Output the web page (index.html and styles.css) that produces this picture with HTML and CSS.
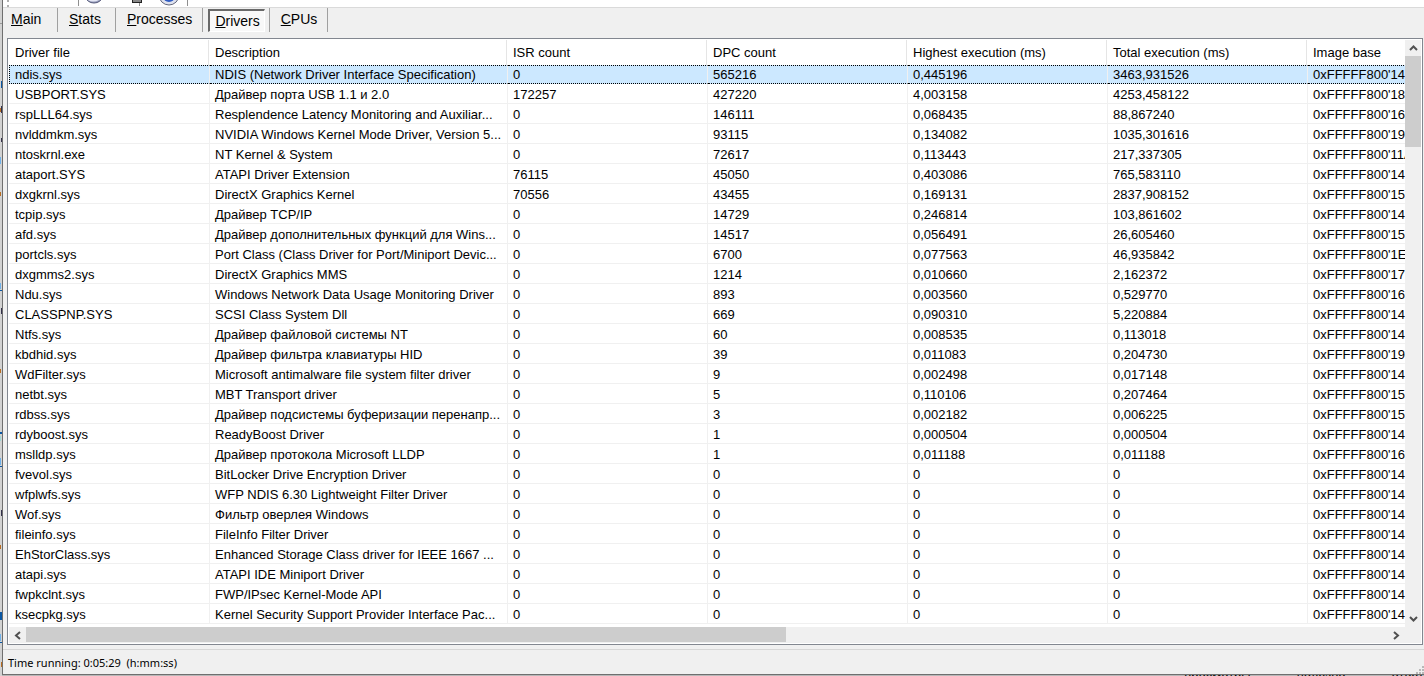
FILE: index.html
```
<!DOCTYPE html>
<html lang="en">
<head>
<meta charset="utf-8">
<title>Drivers</title>
<link rel="stylesheet" href="styles.css">
</head>
<body>
<div class="desktop">
  <div class="behind-left">
    <svg width="2" height="676" viewBox="0 0 2 676" aria-hidden="true">
      <path d="M0 23h2v1H0z" fill="#999"/>
      <path d="M1 81h1v7H1zM0 290h2v1H0zM0 432h2v2H0zM0 466h2v1H0zM0 612h2v8H0zM0 642h2v1H0z" fill="#0a57a4"/>
      <path d="M0 157h1v7H0zM0 283h1v6H0zM0 458h1v7H0zM0 634h1v7H0z" fill="#6fb1ea"/>
      <path d="M0 108h1v4H0zM0 192h1v4H0zM0 369h1v4H0zM0 545h1v4H0zM1 662h1v5H1z" fill="#b86c20"/>
      <path d="M1 106h1v7H1zM1 138h1v4H1zM1 308h1v6H1zM1 510h1v6H1z" fill="#33304a"/>
      <path d="M0 436h1v5H0z" fill="#9ed8d4"/>
    </svg>
  </div>
  <main class="window">
    <div class="toolbar">
      <span class="grip"></span>
      <svg width="260" height="7" viewBox="0 0 260 7" aria-hidden="true">
        <path d="M70.500 0V6M131.500 0V6M179.500 0V6" stroke="#8f8f8f"/>
        <ellipse cx="86" cy="-3" rx="8" ry="6" fill="#9aa0bd" stroke="#55597a"/>
        <path d="M80 0Q85 3 91 0Z" fill="#e6e8f5"/>
        <path d="M124 0h10v3h-10z" fill="#222"/><path d="M125 0h8v2h-8z" fill="#888"/>
        <circle cx="161" cy="-5" r="10" fill="#dfe2ee" stroke="#62667c"/>
        <circle cx="161" cy="-4" r="6" fill="#315ec4"/>
      </svg>
    </div>
    <nav class="tabs">
      <button class="tab"><u>M</u>ain</button>
      <button class="tab"><u>S</u>tats</button>
      <button class="tab"><u>P</u>rocesses</button>
      <button class="tab active"><span><u>D</u>rivers</span></button>
      <button class="tab"><u>C</u>PUs</button>
    </nav>
    <section class="panel">
      <div class="list">
        <table>
          <colgroup><col class="c-file"><col class="c-desc"><col class="c-num"><col class="c-num"><col class="c-num"><col class="c-num"><col class="c-num"></colgroup>
          <thead><tr><th>Driver file</th><th>Description</th><th>ISR count</th><th>DPC count</th><th>Highest execution (ms)</th><th>Total execution (ms)</th><th>Image base</th></tr></thead>
          <tbody id="rows"></tbody>
        </table>
      </div>
      <div class="vbar">
        <button class="arrow" aria-label="Scroll up"><svg width="9" height="6" viewBox="0 0 9 6"><path d="M1 5L4.500 1.500L8 5"/></svg></button>
        <div class="vthumb"></div>
        <button class="arrow down" aria-label="Scroll down"><svg width="9" height="6" viewBox="0 0 9 6"><path d="M1 1L4.500 4.500L8 1"/></svg></button>
      </div>
      <div class="hbar">
        <button class="arrow" aria-label="Scroll left"><svg width="7" height="9" viewBox="0 0 7 9"><path d="M6 1L2 4.500L6 8"/></svg></button>
        <div class="track"><div class="hthumb"></div></div>
        <button class="arrow" aria-label="Scroll right"><svg width="7" height="9" viewBox="0 0 7 9"><path d="M1 1L5 4.500L1 8"/></svg></button>
      </div>
    </section>
    <footer class="status"><span>Time running: 0:05:29&nbsp; (h:mm:ss)</span>
      <svg class="sizer" width="8" height="8" viewBox="0 0 8 8" aria-hidden="true"><path d="M0 6h2v2H0zM3 6h2v2H3zM6 6h2v2H6zM3 3h2v2H3zM6 3h2v2H6zM6 0h2v2H6z" fill="#b8b8b8"/></svg>
    </footer>
  </main>
  <div class="behind-bottom"><span>просмотры</span><span>полезно</span><span>ответ</span></div>
</div>
<script src="app.js"></script>
</body>
</html>
```
FILE: styles.css
```
* { box-sizing: border-box; }
body { margin: 0; background: #cfcfcf; color: #000; font: 13px/19px "Liberation Sans", Arial, sans-serif; }
button { border: 0; margin: 0; padding: 0; background: none; color: inherit; font: inherit; }
.desktop { display: grid; grid-template-columns: 2px minmax(0, 1fr); grid-template-rows: minmax(0, 1fr) 1px; height: 100vh; overflow: hidden; }
.behind-left { grid-row: 1 / 3; background: #d2d2d2; overflow: hidden; }
.behind-left svg { display: block; }
.window { display: flex; flex-direction: column; min-height: 0; background: #f0f0f0; border-left: 1px solid #6f6f6f; border-bottom: 1px solid #6f6f6f; }
.toolbar { display: flex; gap: 2px; height: 8px; flex: none; background: #fff; border-bottom: 1px solid #dadada; padding-left: 4px; }
.grip { width: 2px; border-left: 2px dotted #b0b0b0; margin-right: -3px; }
.tabs { display: flex; height: 30px; flex: none; font-size: 14px; line-height: 22px; }
.tab { height: 24px; min-width: 58px; padding: 0 10px 2px 11px; border-right: 1px solid #a0a0a0; text-align: left; }
.tab:first-child { min-width: 55px; padding-left: 8px; }
.tab.active { padding: 0 4px 0 5px; }
.tab.active span { display: block; height: 23px; padding: 0 4px 0 5px; border: 1px solid #fff; border-top: 2px solid #696969; border-left: 2px solid #696969; background: #f8f8f8; line-height: 20px; }
.panel { flex: 1; min-height: 0; display: grid; grid-template-columns: minmax(0, 1fr) 16px; grid-template-rows: minmax(0, 1fr) 16px; margin: 0 1px 0 4px; padding: 1px; border: 1px solid #828790; background: #fff; }
.list { overflow: hidden; }
table { table-layout: fixed; border-collapse: separate; border-spacing: 0; width: 1499px; }
.c-file { width: 201px; }
.c-desc { width: 298px; }
.c-num { width: 200px; }
th, td { height: 20px; padding: 0 4px 0 5px; text-align: left; font-weight: normal; white-space: nowrap; overflow: hidden; text-overflow: ellipsis; }
th { height: 25px; background: linear-gradient(#e5e5e5, #e5e5e5) right 1px top / 1px 100% no-repeat; }
td { border-right: 1px solid #f0f0f0; border-bottom: 1px solid #f0f0f0; padding-top: 3px; line-height: 16px; }
th:first-child, td:first-child { padding-left: 6px; }
.selected td { height: 19px; background: #cce8ff; border-top: 1px dotted #000; border-bottom: 1px dotted #000; padding-top: 1px; }
.selected td:first-child { border-left: 1px dotted #000; padding-left: 5px; }
.vbar, .hbar { display: flex; background: #f0f0f0; }
.vbar { flex-direction: column; }
.hbar { grid-column: 1 / 3; padding-right: 16px; }
.arrow { flex: none; width: 16px; height: 16px; display: flex; align-items: center; justify-content: center; }
.hbar .arrow { width: 17px; }
.arrow svg { display: block; fill: none; stroke: #505050; stroke-width: 2; }
.down { margin-top: auto; }
.vthumb { height: 91px; background: #cdcdcd; }
.track { flex: 1; }
.hthumb { width: 55.800%; height: 15px; background: #cdcdcd; }
.status { flex: none; height: 25px; display: flex; align-items: center; justify-content: space-between; margin-top: 4px; padding: 1px 0 0 5px; border-top: 1px solid #d7d7d7; font: 11px/16px "Noto Sans", sans-serif; }
.sizer { align-self: flex-end; }
.behind-bottom { display: flex; justify-content: flex-end; gap: 46px; overflow: hidden; background: #b8b8b8; line-height: 4px; }
```
FILE: app.js
```
const drivers = [
  ["ndis.sys", "NDIS (Network Driver Interface Specification)", "0", "565216", "0,445196", "3463,931526", "14"],
  ["USBPORT.SYS", "Драйвер порта USB 1.1 и 2.0", "172257", "427220", "4,003158", "4253,458122", "18"],
  ["rspLLL64.sys", "Resplendence Latency Monitoring and Auxiliar...", "0", "146111", "0,068435", "88,867240", "16"],
  ["nvlddmkm.sys", "NVIDIA Windows Kernel Mode Driver, Version 5...", "0", "93115", "0,134082", "1035,301616", "19"],
  ["ntoskrnl.exe", "NT Kernel & System", "0", "72617", "0,113443", "217,337305", "11A"],
  ["ataport.SYS", "ATAPI Driver Extension", "76115", "45050", "0,403086", "765,583110", "14"],
  ["dxgkrnl.sys", "DirectX Graphics Kernel", "70556", "43455", "0,169131", "2837,908152", "15"],
  ["tcpip.sys", "Драйвер TCP/IP", "0", "14729", "0,246814", "103,861602", "14"],
  ["afd.sys", "Драйвер дополнительных функций для Wins...", "0", "14517", "0,056491", "26,605460", "15"],
  ["portcls.sys", "Port Class (Class Driver for Port/Miniport Devic...", "0", "6700", "0,077563", "46,935842", "1E"],
  ["dxgmms2.sys", "DirectX Graphics MMS", "0", "1214", "0,010660", "2,162372", "17"],
  ["Ndu.sys", "Windows Network Data Usage Monitoring Driver", "0", "893", "0,003560", "0,529770", "16"],
  ["CLASSPNP.SYS", "SCSI Class System Dll", "0", "669", "0,090310", "5,220884", "14"],
  ["Ntfs.sys", "Драйвер файловой системы NT", "0", "60", "0,008535", "0,113018", "14"],
  ["kbdhid.sys", "Драйвер фильтра клавиатуры HID", "0", "39", "0,011083", "0,204730", "19"],
  ["WdFilter.sys", "Microsoft antimalware file system filter driver", "0", "9", "0,002498", "0,017148", "14"],
  ["netbt.sys", "MBT Transport driver", "0", "5", "0,110106", "0,207464", "15"],
  ["rdbss.sys", "Драйвер подсистемы буферизации перенапр...", "0", "3", "0,002182", "0,006225", "15"],
  ["rdyboost.sys", "ReadyBoost Driver", "0", "1", "0,000504", "0,000504", "14"],
  ["mslldp.sys", "Драйвер протокола Microsoft LLDP", "0", "1", "0,011188", "0,011188", "16"],
  ["fvevol.sys", "BitLocker Drive Encryption Driver", "0", "0", "0", "0", "14"],
  ["wfplwfs.sys", "WFP NDIS 6.30 Lightweight Filter Driver", "0", "0", "0", "0", "14"],
  ["Wof.sys", "Фильтр оверлея Windows", "0", "0", "0", "0", "14"],
  ["fileinfo.sys", "FileInfo Filter Driver", "0", "0", "0", "0", "14"],
  ["EhStorClass.sys", "Enhanced Storage Class driver for IEEE 1667 ...", "0", "0", "0", "0", "14"],
  ["atapi.sys", "ATAPI IDE Miniport Driver", "0", "0", "0", "0", "14"],
  ["fwpkclnt.sys", "FWP/IPsec Kernel-Mode API", "0", "0", "0", "0", "14"],
  ["ksecpkg.sys", "Kernel Security Support Provider Interface Pac...", "0", "0", "0", "0", "14"]
];
const body = document.getElementById("rows");
drivers.forEach((d, i) => {
  const tr = body.insertRow();
  if (i === 0) tr.className = "selected";
  d.forEach((v, c) => { tr.insertCell().textContent = c === 6 ? "0xFFFFF800'" + v : v; });
});
```
